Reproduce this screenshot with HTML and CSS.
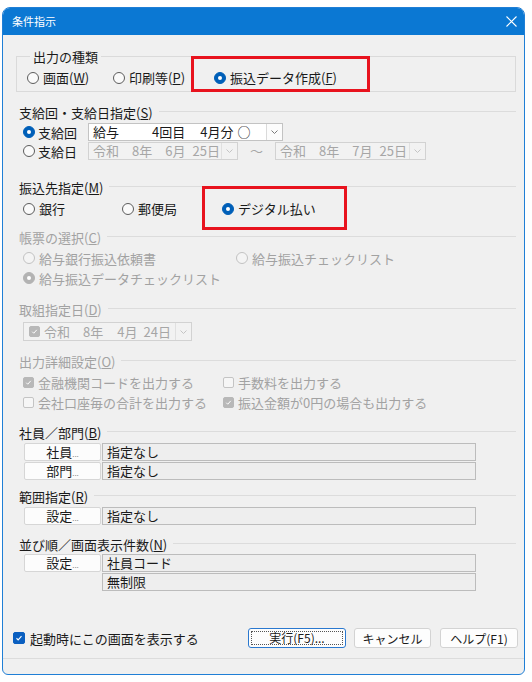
FILE: index.html
```html
<!DOCTYPE html>
<html lang="ja">
<head>
  <meta charset="UTF-8">
  <title>条件指示</title>
  <link rel="stylesheet" href="styles.css">
</head>
<body>

<div class="window">
  <div class="titlebar">
    <span class="title">条件指示</span>
    <svg class="close" width="11" height="11" viewBox="0 0 11 11">
      <path d="M0.5 0.5L10.5 10.5M10.5 0.5L0.5 10.5" stroke="#fff" stroke-width="1.1" fill="none"/>
    </svg>
  </div>

  <div class="body">
    <div class="content">

      <!-- 出力の種類 -->
      <fieldset class="group">
        <legend>出力の種類</legend>
        <div class="row">
          <label class="radio" style="width:86px"><span class="rb"></span>画面(<u>W</u>)</label>
          <label class="radio" style="width:101px"><span class="rb"></span>印刷等(<u>P</u>)</label>
          <label class="radio"><span class="rb on"></span>振込データ作成(<u>F</u>)</label>
        </div>
      </fieldset>

      <!-- 支給回・支給日指定 -->
      <div class="sec sec-pay">
        <div class="sec-head">支給回・支給日指定(<u>S</u>)</div>
        <div class="row row-combo">
          <label class="radio tight" style="width:65px"><span class="rb on"></span>支給回</label>
          <div class="combo" style="width:195px">
            <div class="combo-text">
              <span>給与</span><span class="ml33">4回目</span><span class="ml15">4月分</span><span class="ml4">○</span>
            </div>
            <div class="combo-btn">
              <svg width="7" height="4" viewBox="0 0 7 4"><path d="M0.5 0.5L3.5 3.5L6.5 0.5" fill="none" stroke="#7a7a7a"/></svg>
            </div>
          </div>
        </div>
        <div class="row row-combo">
          <label class="radio tight" style="width:65px"><span class="rb"></span>支給日</label>
          <div class="combo off" style="width:150px">
            <div class="combo-text">
              <span>令和</span><span class="ml13">8年</span><span class="ml13">6月</span><span class="ml7">25日</span>
            </div>
            <div class="combo-btn">
              <svg width="7" height="4" viewBox="0 0 7 4"><path d="M0.5 0.5L3.5 3.5L6.5 0.5" fill="none" stroke="#c4c4c4"/></svg>
            </div>
          </div>
          <span class="tilde">～</span>
          <div class="combo off" style="width:151px">
            <div class="combo-text">
              <span>令和</span><span class="ml13">8年</span><span class="ml13">7月</span><span class="ml7">25日</span>
            </div>
            <div class="combo-btn">
              <svg width="7" height="4" viewBox="0 0 7 4"><path d="M0.5 0.5L3.5 3.5L6.5 0.5" fill="none" stroke="#c4c4c4"/></svg>
            </div>
          </div>
        </div>
      </div>

      <!-- 振込先指定 -->
      <div class="sec sec-dest">
        <div class="sec-head">振込先指定(<u>M</u>)</div>
        <div class="row">
          <label class="radio" style="width:99px"><span class="rb"></span>銀行</label>
          <label class="radio" style="width:100px"><span class="rb"></span>郵便局</label>
          <label class="radio"><span class="rb on"></span>デジタル払い</label>
        </div>
      </div>

      <!-- 帳票の選択 -->
      <div class="sec sec-form disabled">
        <div class="sec-head">帳票の選択(<u>C</u>)</div>
        <div class="row row-20 first">
          <label class="radio" style="width:213px"><span class="rb"></span>給与銀行振込依頼書</label>
          <label class="radio"><span class="rb"></span>給与振込チェックリスト</label>
        </div>
        <div class="row row-20">
          <label class="radio"><span class="rb on"></span>給与振込データチェックリスト</label>
        </div>
      </div>

      <!-- 取組指定日 -->
      <div class="sec sec-date disabled">
        <div class="sec-head">取組指定日(<u>D</u>)</div>
        <div class="row row-date">
          <div class="combo off date" style="width:169px">
            <div class="combo-text">
              <span class="cb on small">
                <svg viewBox="0 0 12 12"><path d="M3 6.3l2 2 4-4.5" fill="none" stroke="#fff" stroke-width="1.3"/></svg>
              </span><span>令和</span><span class="ml13">8年</span><span class="ml14">4月</span><span class="ml6">24日</span>
            </div>
            <div class="combo-btn">
              <svg width="7" height="4" viewBox="0 0 7 4"><path d="M0.5 0.5L3.5 3.5L6.5 0.5" fill="none" stroke="#c4c4c4"/></svg>
            </div>
          </div>
        </div>
      </div>

      <!-- 出力詳細設定 -->
      <div class="sec sec-detail disabled">
        <div class="sec-head">出力詳細設定(<u>O</u>)</div>
        <div class="row row-20 first">
          <label class="check" style="width:200px">
            <span class="cb on"><svg viewBox="0 0 12 12"><path d="M3 6.3l2 2 4-4.5" fill="none" stroke="#fff" stroke-width="1.3"/></svg></span>金融機関コードを出力する
          </label>
          <label class="check"><span class="cb"></span>手数料を出力する</label>
        </div>
        <div class="row row-20">
          <label class="check" style="width:200px"><span class="cb"></span>会社口座毎の合計を出力する</label>
          <label class="check">
            <span class="cb on"><svg viewBox="0 0 12 12"><path d="M3 6.3l2 2 4-4.5" fill="none" stroke="#fff" stroke-width="1.3"/></svg></span>振込金額が0円の場合も出力する
          </label>
        </div>
      </div>

      <!-- 社員／部門 -->
      <div class="sec sec-staff">
        <div class="sec-head">社員／部門(<u>B</u>)</div>
        <div class="pick-row first">
          <button class="pick">社員<span class="dots">...</span></button>
          <div class="field">指定なし</div>
        </div>
        <div class="pick-row">
          <button class="pick">部門<span class="dots">...</span></button>
          <div class="field">指定なし</div>
        </div>
      </div>

      <!-- 範囲指定 -->
      <div class="sec sec-range">
        <div class="sec-head">範囲指定(<u>R</u>)</div>
        <div class="pick-row first">
          <button class="pick">設定<span class="dots">...</span></button>
          <div class="field">指定なし</div>
        </div>
      </div>

      <!-- 並び順／画面表示件数 -->
      <div class="sec sec-order">
        <div class="sec-head">並び順／画面表示件数(<u>N</u>)</div>
        <div class="pick-row first">
          <button class="pick">設定<span class="dots">...</span></button>
          <div class="field">社員コード</div>
        </div>
        <div class="pick-row">
          <div class="field indent">無制限</div>
        </div>
      </div>

    </div>

    <div class="footer">
      <label class="check startup">
        <span class="cb on blue"><svg viewBox="0 0 12 12"><path d="M3 6.3l2 2 4-4.5" fill="none" stroke="#fff" stroke-width="1.3"/></svg></span>起動時にこの画面を表示する
      </label>
      <div class="buttons">
        <button class="btn default" style="width:98px"><span class="focus">実行(F5)...</span></button>
        <button class="btn" style="width:77px">キャンセル</button>
        <button class="btn help" style="width:78px">ヘルプ(F1)</button>
      </div>
    </div>
    <div class="status"></div>
  </div>

  <!-- 赤枠の注記 -->
  <div class="mark mark-output"></div>
  <div class="mark mark-dest"></div>
</div>

</body>
</html>
```

FILE: styles.css
```css
body {
  margin: 0;
  background: #fff;
  font-family: "Noto Sans CJK JP", "Noto Sans", sans-serif;
  font-size: 13px;
  line-height: 17px;
  color: #1a1a1a;
}
u {
  text-underline-offset: 1px;
}
.window {
  position: relative;
  margin: 7px 0 0 2px;
  width: 523px;
  height: 668px;
  box-sizing: border-box;
  border: 1px solid #1f7fd6;
  border-radius: 8px 8px 6px 6px;
  background: #f0f0f0;
  display: flex;
  flex-direction: column;
  overflow: hidden;
}
.titlebar {
  height: 27px;
  flex: 0 0 auto;
  background: #0b78d3;
  color: #fff;
  display: flex;
  align-items: center;
  justify-content: space-between;
  padding: 0 7px 0 9px;
}
.title {
  font-size: 11px;
}
.body {
  flex: 1;
  display: flex;
  flex-direction: column;
}
.content {
  padding: 13px 8px 0 13px;
}

/* グループ枠 */
.group {
  margin: 0;
  padding: 0 0 0 10px;
  height: 44px;
  box-sizing: border-box;
  border: 1px solid #dadada;
}
.group legend {
  margin-left: 3px;
  padding: 0 3px;
  line-height: 17px;
}
.group .row {
  margin: 4px 0 0 0;
}

/* 見出し＋区切り線 */
.sec {
  padding-left: 3px;
}
.sec-head {
  display: flex;
  align-items: center;
  height: 16px;
  line-height: 16px;
  white-space: nowrap;
}
.sec-head::after {
  content: "";
  flex: 1;
  height: 1px;
  margin: -4px 0 0 6px;
  background: #dcdcdc;
}
.sec-pay { margin-top: 13px; }
.sec-dest { margin-top: 19px; }
.sec-form { margin-top: 13px; }
.sec-date { margin-top: 14px; }
.sec-detail { margin-top: 13px; }
.sec-staff { margin-top: 13px; }
.sec-range { margin-top: 9px; }
.sec-order { margin-top: 12px; }

.row {
  display: flex;
  align-items: center;
  height: 17px;
  margin-left: 4px;
  white-space: nowrap;
}
.sec-dest .row { margin-top: 4px; }
.row-combo { height: 19px; align-items: flex-start; }
.sec-pay .sec-head + .row-combo { margin-top: 2px; }
.row-20 { height: 20px; }
.row-20.first { margin-top: 2px; }
.row-date { height: 19px; margin-top: 4px; }

.disabled {
  color: #a2a2a2;
}

/* ラジオボタン */
.radio,
.check {
  display: flex;
  align-items: center;
  flex: 0 0 auto;
}
.row-combo .radio {
  height: 18px;
}
.rb {
  width: 12px;
  height: 12px;
  box-sizing: border-box;
  border: 1px solid #5c5c5c;
  border-radius: 50%;
  margin-right: 4px;
  position: relative;
  background: #fafafa;
}
.radio.tight .rb { margin-right: 3px; }
.rb.on {
  background: #005fb8;
  border-color: #005fb8;
}
.rb.on::after {
  content: "";
  position: absolute;
  left: 3px;
  top: 3px;
  width: 4px;
  height: 4px;
  border-radius: 50%;
  background: #fff;
}
.disabled .rb {
  border-color: #c2c2c2;
  background: #f4f4f4;
}
.disabled .rb.on {
  background: #b3b3b3;
  border-color: #b3b3b3;
}

/* チェックボックス */
.cb {
  width: 11px;
  height: 11px;
  box-sizing: border-box;
  border: 1px solid #c4c4c4;
  border-radius: 2px;
  margin-right: 4px;
  background: #f6f6f6;
  display: inline-flex;
}
.cb svg {
  width: 100%;
  height: 100%;
}
.cb.on {
  background: #b8b8b8;
  border-color: #b8b8b8;
}
.cb.blue {
  width: 12px;
  height: 12px;
  background: #0a5fc0;
  border-color: #0a5fc0;
  margin-right: 5px;
}

/* コンボボックス */
.combo {
  display: flex;
  height: 18px;
  box-sizing: border-box;
  border: 1px solid #c3c3c3;
  background: #fff;
  flex: 0 0 auto;
}
.combo-text {
  flex: 1;
  display: flex;
  align-items: center;
  padding-left: 4px;
  line-height: 16px;
  white-space: nowrap;
}
.combo-btn {
  width: 15px;
  border-left: 1px solid #dadada;
  display: flex;
  align-items: center;
  justify-content: center;
  background: #fcfcfc;
}
.combo.off {
  background: #f2f2f2;
  border-color: #d2d2d2;
  color: #a6a6a6;
}
.combo.off .combo-btn {
  background: #f2f2f2;
  border-color: #e0e0e0;
}
.combo.date {
  height: 19px;
}
.combo.date .combo-text {
  padding-left: 5px;
}
.tilde {
  width: 37px;
  text-align: center;
  color: #a6a6a6;
  line-height: 18px;
}
.ml4 { margin-left: 4px; }
.ml6 { margin-left: 6px; }
.ml7 { margin-left: 7px; }
.ml13 { margin-left: 13px; }
.ml14 { margin-left: 14px; }
.ml15 { margin-left: 15px; }
.ml33 { margin-left: 33px; }

/* 選択ボタン＋表示欄 */
.pick-row {
  display: flex;
  height: 18px;
  margin: 1px 0 0 5px;
}
.pick-row.first {
  margin-top: 2px;
}
.sec-order .pick-row.first {
  margin-top: 1px;
}
.pick {
  width: 77px;
  height: 18px;
  margin: 0 1px 0 0;
  padding: 0;
  border: 1px solid #d6d6d6;
  border-radius: 2px;
  background: #fcfcfc;
  font-family: inherit;
  font-size: 13px;
  line-height: 16px;
  color: #1a1a1a;
}
.dots {
  font-size: 8px;
  color: #8a8a8a;
  letter-spacing: 0;
}
.field {
  width: 374px;
  height: 18px;
  box-sizing: border-box;
  border: 1px solid #bcbcbc;
  background: #eeeeee;
  padding-left: 4px;
  line-height: 16px;
}
.field.indent {
  margin-left: 78px;
}

/* 下部ボタン */
.footer {
  margin-top: auto;
  display: flex;
  align-items: center;
  justify-content: space-between;
  height: 20px;
  padding: 0 6px 10px 10px;
}
.startup {
  color: #1a1a1a;
}
.buttons {
  display: flex;
  gap: 8px;
}
.btn {
  height: 20px;
  padding: 0;
  border: 1px solid #d3d3d3;
  border-radius: 3px;
  background: #fdfdfd;
  font-family: inherit;
  font-size: 12px;
  color: #1a1a1a;
}
.btn.help {
  margin-left: 1px;
}
.btn.default {
  border-color: #2a78cf;
  display: flex;
  padding: 2px;
}
.btn .focus {
  flex: 1;
  border: 1px dotted #555;
  line-height: 12px;
}
.status {
  height: 15px;
  border-top: 1px solid #dcdcdc;
}

/* 赤枠の注記 */
.mark {
  position: absolute;
  border: 3px solid #e8131e;
  box-sizing: border-box;
}
.mark-output {
  left: 188px;
  top: 48px;
  width: 179px;
  height: 36px;
}
.mark-dest {
  left: 199px;
  top: 178px;
  width: 145px;
  height: 44px;
}
```
